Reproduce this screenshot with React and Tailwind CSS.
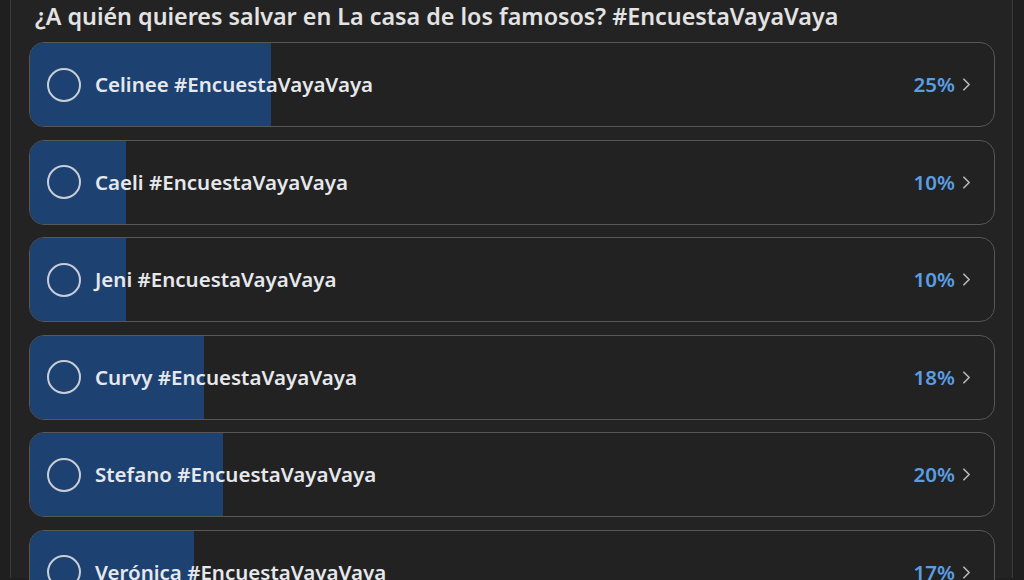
import { ChevronRight } from "lucide-react"

const options = [
  { name: "Celinee", pct: 25 },
  { name: "Caeli", pct: 10 },
  { name: "Jeni", pct: 10 },
  { name: "Curvy", pct: 18 },
  { name: "Stefano", pct: 20 },
  { name: "Verónica", pct: 17 },
]

const PollOption = ({ name, pct }) => (
  <div className="relative h-[85px] shrink-0 overflow-hidden rounded-[15px] border border-[#575757] bg-[#222222]">
    {/* result bar */}
    <div className="absolute inset-y-0 left-0 bg-[#1d4271]" style={{ width: `${pct}%` }} />
    <div className="relative flex h-full items-center pl-[17px] pr-[20px]">
      <span className="h-[34px] w-[34px] rounded-full border-2 border-[#c9ced6]" />
      <span className="ml-[14px] text-[20.5px] font-semibold text-[#e6e8ec]">{name} #EncuestaVayaVaya</span>
      <span className="ml-auto text-[20.5px] font-semibold text-[#5a9ee2]">{pct}%</span>
      <ChevronRight className="ml-[1px] -mr-[3px] h-[21px] w-[21px] text-[#b4b4b4]" strokeWidth={2} />
    </div>
  </div>
)

export default function App() {
  return (
    <div className="h-[580px] overflow-hidden bg-[#1f1f1f]" style={{ fontFamily: "'Noto Sans', 'Open Sans', sans-serif" }}>
      <div className="ml-[10px] h-full w-[1003px] border-x border-[#3b3b3b] bg-[#232323] pl-[18px] pr-[17px]">
        <h1 className="-mt-[2px] pl-[6px] text-[23.3px] font-semibold leading-[36px] text-[#e3e3e3]">
          ¿A quién quieres salvar en La casa de los famosos? #EncuestaVayaVaya
        </h1>
        <div className="mt-[8px] flex flex-col gap-[12.5px]">
          {options.map((o) => (
            <PollOption key={o.name} {...o} />
          ))}
        </div>
      </div>
    </div>
  )
}
